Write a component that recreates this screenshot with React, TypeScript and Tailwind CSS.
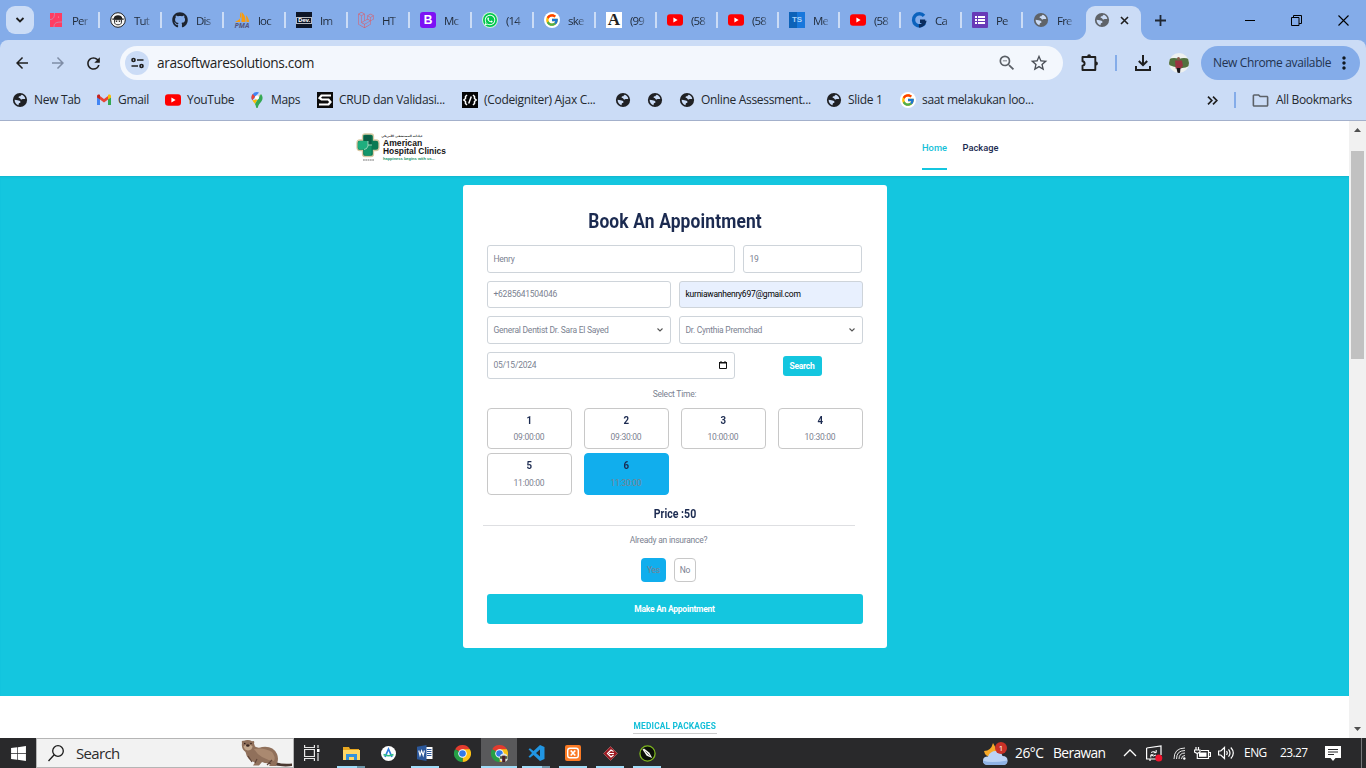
import type { ReactNode } from "react";
import { FaGithub, FaLaravel, FaWhatsapp, FaWindows } from "react-icons/fa";
import { FcGoogle } from "react-icons/fc";
import {
  MdArrowBack,
  MdArrowForward,
  MdMoreVert,
  MdOutlineFolder,
  MdRefresh,
  MdStarOutline,
  MdZoomOut,
} from "react-icons/md";

/* ---------- small brand icons ---------- */

const YouTube = () => (
  <svg width="16" height="16" viewBox="0 0 16 16">
    <rect y="2.3" width="16" height="11.4" rx="3" fill="#f00" />
    <path d="M6.4 5.6 10.6 8l-4.2 2.4z" fill="#fff" />
  </svg>
);

const Google = () => (
  <span className="flex size-4 items-center justify-center rounded-full bg-white">
    <FcGoogle size={14} />
  </span>
);

const Globe = ({ className }: { className: string }) => (
  <svg width="16" height="16" viewBox="0 0 16 16" className={className}>
    <circle cx="8" cy="8" r="7.100" fill="currentColor" />
    <path
      d="M9.700 2.700c1.800.6 3.200 2 3.600 3.900-.8.900-1.500.3-2.300.3-1 0-1 .9-2 .5-.9-.4-.6-1.500-1.500-1.500-.8 0-1.300-.5-.8-1.200.5-.6 1.600-.2 1.900-1zM2.600 7.800l2.900.4c1.300.2 3 .5 3 1.900 0 1.200-1.700.9-1.800 1.900l-.2 1.300C4.200 12.700 2.600 10.600 2.600 7.800z"
      fill="#cbdcf6"
    />
  </svg>
);

const Pink = () => (
  <svg width="16" height="16" viewBox="0 0 16 16">
    <path d="M2 1h12v14H2z" fill="#ff3d62" />
    <path d="M2 7.500c3.500 0 4.500-2.500 4.500-6.500M6 15c0-4 2-5 8-5" stroke="#c493b8" strokeWidth=".8" fill="none" />
    <circle cx="10.500" cy="5" r=".6" fill="#ff9ab0" />
  </svg>
);

const Face = () => (
  <svg width="16" height="16" viewBox="0 0 16 16">
    <circle cx="8" cy="8" r="7.3" fill="#f7f7f7" stroke="#222" strokeWidth="1" />
    <path d="M2.300 7.700h11.400V6.500h-1.400C12 4.300 10.500 3.200 8 3.200S4 4.300 3.700 6.500H2.300z" fill="#222" />
    <path d="M4.500 7.700h7v2.500c0 1.700-1.500 2.600-3.500 2.600s-3.500-.9-3.500-2.600z" fill="#f7f7f7" stroke="#222" strokeWidth=".9" />
    <circle cx="6.500" cy="9.300" r=".8" fill="#222" />
    <circle cx="9.500" cy="9.300" r=".8" fill="#222" />
  </svg>
);

const Pma = () => (
  <span className="flex h-4 w-4 flex-col items-center">
    <svg width="16" height="11" viewBox="0 0 16 11">
      <path d="M6 0c2 3 2 7-5 10h5zM7.500 0c4 3 4 7 4 10h-4zM12 3c2 2 3 5 3 7h-2.500z" fill="#f89c0e" />
    </svg>
    <span className="text-[7px] font-bold italic leading-[5px] text-[#54567e]">PMA</span>
  </span>
);

const Dev = () => (
  <span className="flex size-4 items-center justify-center bg-[#0d1628] text-[6px] font-bold tracking-tighter text-white">
    <span className="border border-white/70 px-px leading-[5px]">Dev.</span>
  </span>
);

const Bootstrap = () => (
  <span className="flex size-4 items-center justify-center rounded-[3px] bg-[#7c12f5] font-['Liberation_Sans'] text-[12px] font-bold text-white">
    B
  </span>
);

const WhatsApp = () => (
  <span className="flex size-4 items-center justify-center rounded-full border border-white/80 bg-[#00c84b]">
    <FaWhatsapp size={12} className="text-white" />
  </span>
);

const LetterA = () => (
  <span className="flex size-4 items-center justify-center bg-white font-['Liberation_Serif'] text-[17px] font-bold leading-4 text-[#222]">
    A
  </span>
);

const Ts = () => (
  <span className="flex size-4 items-center justify-center bg-gradient-to-r from-[#0d62b8] from-50% to-[#1877dc] to-50% font-['Liberation_Sans'] text-[8px] font-bold text-[#a9d2f8]">
    TS
  </span>
);

const BlueG = () => (
  <svg width="16" height="16" viewBox="0 0 16 16" fill="none" strokeWidth="3.4">
    <path d="M13 3.800A6 6 0 1 0 13.600 11" stroke="#0b62bd" />
    <path d="M14.200 9.200H9M13.900 8.500c-.3 3-2.500 5.500-6 5.500" stroke="#0a2c5e" />
  </svg>
);

const Forms = () => (
  <svg width="16" height="16" viewBox="0 0 16 16">
    <rect width="16" height="16" rx="1" fill="#673ab7" />
    <path d="M3 4h2v2H3zM6 4h7v2H6zM3 7h2v2H3zM6 7h7v2H6zM3 10h2v2H3zM6 10h7v2H6z" fill="#fff" />
  </svg>
);

const Gmail = () => (
  <svg width="16" height="16" viewBox="0 0 16 16">
    <path d="M1 5v8h3V7.300z" fill="#4285f4" />
    <path d="M15 5v8h-3V7.300z" fill="#34a853" />
    <path d="M4 4 8 7l4-3v3.600l-4 3-4-3z" fill="#ea4335" />
    <path d="M1 4.200C1 2.600 2.800 2 4 3v4.600L1 5.400z" fill="#c5221f" />
    <path d="M15 4.200C15 2.600 13.200 2 12 3v4.600l3-2.200z" fill="#fbbc04" />
  </svg>
);

const MapsPin = () => (
  <svg width="16" height="16" viewBox="0 0 16 16">
    <path d="M8 0a5.600 5.600 0 0 0-5.500 5.600c0 1 .3 1.900.8 2.700L10 .4A5.600 5.600 0 0 0 8 0z" fill="#4285f4" />
    <path d="M3.700 2.100A5.600 5.600 0 0 0 3.200 8.200L6.200 4.700z" fill="#ea4335" />
    <path d="M3.300 8.300c.8 1.400 2 2.400 2.700 3.700l5.600-10.100L6 8z" fill="#fbbc04" />
    <path
      d="M12 2c2 2.500 2 5 .5 7.300C11 11.500 9.500 12.500 8.800 15.400c-.2.800-1.400.8-1.600 0-.2-1.200-.6-2.300-1.200-3.400z"
      fill="#34a853"
    />
    <circle cx="8" cy="5.600" r="2.100" fill="#fff" />
  </svg>
);

const BlackS = () => (
  <svg width="16" height="16" viewBox="0 0 16 16">
    <path d="M0 0h16v16H0z" fill="#0b0b0b" />
    <path d="M14 3.500H4.500L2.500 6l2 1.500h7L13.500 10l-2 2.500H2" fill="none" stroke="#fff" strokeWidth="2.200" />
  </svg>
);

const CodeMark = () => (
  <svg width="16" height="16" viewBox="0 0 16 16">
    <path d="M0 0h16v16H0z" fill="#050505" />
    <path
      d="M5 3 3.500 4.500v2L1.800 8l1.700 1.500v2L5 13M11 3l1.500 1.500v2L14.200 8l-1.700 1.500v2L11 13M9.300 4.500 6.700 11.500"
      fill="none"
      stroke="#fff"
      strokeWidth="1.500"
    />
  </svg>
);

/* ---------- browser ---------- */

const tabs: { icon: ReactNode; text: string; wide?: boolean }[] = [
  { icon: <Pink />, text: "Per", wide: true },
  { icon: <Face />, text: "Tut", wide: true },
  { icon: <FaGithub size={16} className="text-[#1d2430]" />, text: "Dis", wide: true },
  { icon: <Pma />, text: "loc", wide: true },
  { icon: <Dev />, text: "Im", wide: true },
  { icon: <FaLaravel size={16} className="text-[#e2575f]" />, text: "HT", wide: true },
  { icon: <Bootstrap />, text: "Mc", wide: true },
  { icon: <WhatsApp />, text: "(14", wide: true },
  { icon: <Google />, text: "ske", wide: true },
  { icon: <LetterA />, text: "(99" },
  { icon: <YouTube />, text: "(58" },
  { icon: <YouTube />, text: "(58" },
  { icon: <Ts />, text: "Me" },
  { icon: <YouTube />, text: "(58" },
  { icon: <BlueG />, text: "Ca" },
  { icon: <Forms />, text: "Pe" },
  { icon: <Globe className="text-[#5f6368]" />, text: "Fre" },
];

function TabStrip() {
  return (
    <div className="flex h-10 shrink-0 items-center bg-[#84ace9]">
      <div className="ml-1.5 mr-1 flex size-7 items-center justify-center rounded-[9px] bg-[#cbdcf6]">
        <svg width="10" height="6" viewBox="0 0 10 6" fill="none" stroke="#1f1f1f" strokeWidth="1.8">
          <path d="m1.500 1 3.500 3.500L8.500 1" />
        </svg>
      </div>
      {tabs.map((tab, i) => (
        <div key={i} className="flex items-center pl-2.5">
          <span className="flex size-4 shrink-0 items-center justify-center">{tab.icon}</span>
          <span
            className={`${tab.wide ? "w-4" : "w-[15px]"} ml-2 whitespace-nowrap pt-px text-[11.500px] tracking-[-0.07em] text-[#1f2937] [mask-image:linear-gradient(to_right,black_60%,rgba(0,0,0,0.3))]`}
          >
            {tab.text}
          </span>
          {i < 16 && <span className="ml-2.5 h-4 w-0.5 bg-[#cbdcf6]" />}
        </div>
      ))}
      <div className="ml-[3px] flex h-10 items-end">
        <svg width="11" height="11" viewBox="0 0 11 11">
          <path d="M11 0v11H0C6 11 11 6 11 0z" fill="#cbdcf6" />
        </svg>
        <div className="flex h-[34px] w-[55px] items-center rounded-t-[9px] bg-[#cbdcf6] pb-1.5 pl-2">
          <Globe className="text-[#5f6368]" />
          <svg className="ml-2.5" width="9" height="9" viewBox="0 0 9 9" stroke="#1f1f1f" strokeWidth="1.600">
            <path d="m1 1 7 7M8 1 1 8" />
          </svg>
        </div>
        <svg width="11" height="11" viewBox="0 0 11 11">
          <path d="M0 0v11h11C5 11 0 6 0 0z" fill="#cbdcf6" />
        </svg>
      </div>
      <svg className="ml-[3px]" width="11" height="11" viewBox="0 0 11 11" stroke="#1f2733" strokeWidth="1.800">
        <path d="M5.500 0v11M0 5.500h11" />
      </svg>
      <div className="ml-auto flex items-center pr-[17px]">
        <svg width="10" height="11" viewBox="0 0 10 11" stroke="#000">
          <path d="M0 5.500h10" />
        </svg>
        <svg className="ml-9" width="11" height="11" viewBox="0 0 11 11" fill="none" stroke="#000">
          <path d="M.5 2.500h7.500v8H.5zM2.500 2.500v-2h8v8H8" />
        </svg>
        <svg className="ml-9" width="11" height="11" viewBox="0 0 11 11" stroke="#000" strokeWidth="1.100">
          <path d="m.5.5 10 10M10.500.5l-10 10" />
        </svg>
      </div>
    </div>
  );
}

function Toolbar() {
  return (
    <div className="bg-[#84ace9]">
      <div className="flex h-10 items-center rounded-t-lg bg-[#cbdcf6] pt-1.5 text-[#1f1f1f]">
        <MdArrowBack size={18} className="ml-[13px]" />
        <MdArrowForward size={18} className="ml-[18px] text-[#7f8da6]" />
        <MdRefresh size={19} className="ml-[17px]" />
        <div className="ml-[17px] flex h-[34px] w-[943px] items-center rounded-full bg-[#f3f7fd] pl-[5px]">
          <span className="flex size-6 items-center justify-center rounded-full bg-[#cbdcf6]">
            <svg width="13" height="12" viewBox="0 0 13 12" fill="none" stroke="#1f1f1f" strokeWidth="1.700">
              <circle cx="2.500" cy="3" r="1.500" />
              <path d="M6 3h6.500M.5 9H7" />
              <circle cx="10.500" cy="9" r="1.500" />
            </svg>
          </span>
          <span className="ml-2 pt-px text-[13.700px] tracking-[-0.026em]">arasoftwaresolutions.com</span>
          <MdZoomOut size={20} className="ml-auto text-[#5a5f66]" />
          <MdStarOutline size={20} className="ml-3 mr-[14px] text-[#4a4f57]" />
        </div>
        <svg
          className="ml-[17px]"
          width="19"
          height="18"
          viewBox="0 0 19 18"
          fill="none"
          stroke="#1f1f1f"
          strokeWidth="1.900"
          strokeLinejoin="round"
        >
          <path d="M2.500 3h12.800v13H2.500v-4.300c2.800-.3 2.800-4.100 0-4.400z" />
          <path d="M7.200 2.200a1.900 1.900 0 0 1 3.800 0zM16 7.600a1.900 1.900 0 0 1 0 3.800z" fill="#1f1f1f" stroke="none" />
        </svg>
        <span className="ml-4 h-4 w-0.5 bg-[#84ace9]" />
        <svg className="ml-[17px]" width="18" height="16" viewBox="0 0 18 16" fill="none" stroke="#1f1f1f" strokeWidth="2">
          <path d="M9 0v10M4.800 6 9 10.200 13.200 6M2 11v4h14v-4" />
        </svg>
        <svg className="ml-[17px]" width="20" height="20" viewBox="0 0 20 20">
          <clipPath id="avatar">
            <circle cx="10" cy="10" r="10" />
          </clipPath>
          <g clipPath="url(#avatar)">
            <path d="M0 0h20v20H0z" fill="#eef1f0" />
            <path d="M0 6q5-2 10 0 5-2 10 0v7q-5 3-10 1.500Q5 14 0 12z" fill="#53713f" />
            <circle cx="9.500" cy="5.500" r="1.500" fill="#8a5a4a" />
            <path d="M6 7.500h7l1 6h-1.500v2h-6v-3z" fill="#9b3041" />
            <path d="M7.500 15h4l-.5 5H8.500z" fill="#17171c" />
          </g>
        </svg>
        <div className="ml-3 flex h-[34px] w-[159px] items-center rounded-full bg-[#84ace9] pl-3 text-[12px] text-[#223350]">
          <span className="w-[119px] whitespace-nowrap tracking-[-0.03em]">New Chrome available</span>
          <MdMoreVert size={20} className="ml-0.5 text-[#101820]" />
        </div>
      </div>
    </div>
  );
}

function Bookmark({ icon, text, width }: { icon: ReactNode; text?: string; width: string }) {
  return (
    <div className={`flex shrink-0 items-center gap-1.5 ${width}`}>
      <span className="flex size-4 shrink-0 items-center justify-center">{icon}</span>
      <span className="whitespace-nowrap">{text}</span>
    </div>
  );
}

function Bookmarks() {
  const globe = <Globe className="text-[#202124]" />;
  return (
    <div className="flex h-[41px] shrink-0 items-center border-b border-[#a3b0cb] bg-[#cbdcf6] pl-3 text-[12px] tracking-[-0.026em] text-[#24292f]">
      <Bookmark icon={globe} text="New Tab" width="w-[84px]" />
      <Bookmark icon={<Gmail />} text="Gmail" width="w-[69px]" />
      <Bookmark icon={<YouTube />} text="YouTube" width="w-[84px]" />
      <Bookmark icon={<MapsPin />} text="Maps" width="w-[68px]" />
      <Bookmark icon={<BlackS />} text="CRUD dan Validasi..." width="w-[145px]" />
      <Bookmark icon={<CodeMark />} text="(Codeigniter) Ajax C..." width="w-[153px]" />
      <Bookmark icon={globe} width="w-[32px]" />
      <Bookmark icon={globe} width="w-[32px]" />
      <Bookmark icon={globe} text="Online Assessment..." width="w-[147px]" />
      <Bookmark icon={globe} text="Slide 1" width="w-[74px]" />
      <Bookmark icon={<Google />} text="saat melakukan loo..." width="w-[134px]" />
      <svg className="ml-auto" width="11" height="9" viewBox="0 0 11 9" fill="none" stroke="#1f1f1f" strokeWidth="1.700">
        <path d="m1 .7 3.800 3.800L1 8.300M6 .7l3.800 3.800L6 8.300" />
      </svg>
      <span className="ml-4 h-4 w-0.5 bg-[#84ace9]" />
      <MdOutlineFolder size={19} className="ml-[15px] text-[#5c6168]" />
      <span className="ml-1.5 w-[90px] whitespace-nowrap">All Bookmarks</span>
    </div>
  );
}

/* ---------- site ---------- */

function Logo() {
  return (
    <div className="flex h-[30px] items-center gap-[3px] font-['Liberation_Sans']">
      <svg width="24" height="29" viewBox="0 0 24 29" className="-mt-px">
        <path
          d="M9 1h6q2.500 0 2.500 2.500V7H20q3 0 3 3v4.500q0 3-3 3h-2.500V21q0 2.500-2.500 2.500H9q-2.500 0-2.500-2.500v-3.500H4q-3 0-3-3V10q0-3 3-3h2.500V3.500Q6.500 1 9 1z"
          fill="#0b7a53"
          stroke="#d8c9a4"
          strokeWidth="1.300"
        />
        <path d="M8 3q4-2 7.500 0v8H12V8H8z" fill="#0a5f46" />
        <path d="M2 10q0-2 2-2h8v4q0 4.500-4 4.500H4q-2 0-2-2z" fill="#1fae7e" />
        <path d="M8 16.500q4 0 4-4.500h3.500v8q0 2.500-2.500 2.500h-3Q8 22.500 8 20z" fill="#12966a" />
        <path d="M12 8v5q-1 3.500-4 3.500M12 12h4" stroke="#cfe8d4" strokeWidth=".7" fill="none" />
        <path d="M7 27h11" stroke="#777" strokeWidth="1.200" strokeDasharray="1.800 .5" />
      </svg>
      <div className="flex h-[30px] w-[64px] flex-col whitespace-nowrap">
        <span dir="rtl" className="flex h-[6px] w-[38px] items-center justify-center font-['DejaVu_Sans'] text-[3px] font-bold text-[#222]">
          عيادات المستشفى الأمريكي
        </span>
        <span className="text-[8.600px] font-bold leading-[8px] text-[#151515]">American</span>
        <span className="text-[8.400px] font-bold leading-[8px] text-[#151515]">Hospital Clinics</span>
        <span className="text-[4px] font-bold leading-[7px] text-[#15976b]">happiness begins with us...</span>
      </div>
    </div>
  );
}

function Field({ text, box, end, filled }: { text: string; box: string; end?: ReactNode; filled?: boolean }) {
  return (
    <div
      className={`flex items-center justify-between rounded-[3px] border border-[#ced4da] pl-1.5 pr-[7px] ${filled ? "bg-[#e8f0fe] text-black" : "bg-white text-[#7b8291]"} ${box}`}
    >
      <span>{text}</span>
      {end}
    </div>
  );
}

const Caret = () => (
  <svg width="6" height="4" viewBox="0 0 6 4" fill="none" stroke="#555" strokeWidth="1.100">
    <path d="m.5.5 2.500 2.500L5.500.5" />
  </svg>
);

const slots = ["09:00:00", "09:30:00", "10:00:00", "10:30:00", "11:00:00", "11:30:00"];

function BookingCard() {
  return (
    <div className="mx-auto h-[463px] w-[424px] rounded-[3px] bg-white px-6 pt-6 text-[8.500px] leading-[10px] tracking-[-0.029em] text-[#7b8291]">
      <h1 className="flex h-6 origin-center scale-x-[0.87] items-center justify-center whitespace-nowrap text-[20px] font-bold tracking-[0.008em] text-[#1b2a50]">
        Book An Appointment
      </h1>
      <div className="mt-3 flex gap-2">
        <Field text="Henry" box="h-7 w-[248px]" />
        <Field text="19" box="h-7 w-[119px]" />
      </div>
      <div className="mt-2 flex gap-2">
        <Field text="+6285641504046" box="h-[27px] flex-1 pb-px" />
        <Field text="kurniawanhenry697@gmail.com" box="h-[27px] flex-1 pb-px" filled />
      </div>
      <div className="mt-2 flex gap-2">
        <Field text="General Dentist Dr. Sara El Sayed" box="h-7 flex-1" end={<Caret />} />
        <Field text="Dr. Cynthia Premchad" box="h-7 flex-1" end={<Caret />} />
      </div>
      <div className="mt-2 flex items-center">
        <Field
          text="05/15/2024"
          box="h-[27px] w-[248px] pb-px"
          end={
            <svg width="8" height="8" viewBox="0 0 8 8">
              <path d="M.5 1.500h7v6h-7z" fill="none" stroke="#111" />
              <path d="M0 1h8v1.500H0zM1.500 0h1v1h-1zM5.500 0h1v1h-1z" fill="#111" />
            </svg>
          }
        />
        <button className="ml-12 h-5 w-[39px] rounded-[3px] bg-[#14c6df] font-bold text-white">Search</button>
      </div>
      <div className="mt-2.5 flex h-[10px] items-center justify-center">Select Time:</div>
      <div className="mt-[9px] grid grid-cols-[85px_85px_85px_85px] gap-x-3 gap-y-1">
        {slots.map((time, i) => (
          <div
            key={time}
            className={`flex flex-col items-center rounded-[4px] border pt-1.5 ${i > 3 ? "h-[42px]" : "h-[41px]"} ${i === 5 ? "border-[#11aeed] bg-[#11aeed]" : "border-[#c8c8c8]"}`}
          >
            <span className="scale-x-[0.88] text-[11px] font-bold leading-3 tracking-normal text-[#1b2a50]">{i + 1}</span>
            <span className={i > 3 ? "mt-1.5" : "mt-[5px]"}>{time}</span>
          </div>
        ))}
      </div>
      <div className="mt-3 flex h-[14px] scale-x-[0.88] items-center justify-center text-[12px] font-bold tracking-normal text-[#1b2a50]">
        Price :50
      </div>
      <div className="-ml-1 mt-1 w-[372px] border-t border-[#dedfe2]" />
      <div className="mr-3 mt-[9px] flex h-[10px] items-center justify-center">Already an insurance?</div>
      <div className="mr-3 mt-[13px] flex justify-center gap-2">
        <span className="flex h-6 w-[25px] items-center justify-center rounded-[4px] bg-[#11aeed]">Yes</span>
        <span className="flex h-6 w-[22px] items-center justify-center rounded-[4px] border border-[#c8c8c8]">No</span>
      </div>
      <button className="mt-3 h-[30px] w-full rounded-[3px] bg-[#14c6df] font-bold text-white">Make An Appointment</button>
    </div>
  );
}

function Site() {
  return (
    <div className="flex h-[617px] shrink-0 bg-white">
      <div className="flex w-[1349px] flex-col font-['Roboto',sans-serif]">
        <header className="flex h-[55px] shrink-0 pl-[356px] pt-3">
          <Logo />
          <nav className="ml-[475px] flex gap-[15px] text-[9.300px] font-medium">
            <a className="flex h-[37px] w-[25px] items-center justify-center whitespace-nowrap border-b-2 border-[#14c6df] pb-2 pt-0.5 text-[#14bfd8]">
              Home
            </a>
            <a className="flex h-[37px] w-[37px] items-center justify-center pb-2.5 pt-0.5 text-[#1b2a50]">
              Package
            </a>
          </nav>
        </header>
        <main className="h-[520px] shrink-0 bg-[#14c6df] pt-[9px] shadow-[inset_0_2px_2px_-1px_#12b5cd]">
          <BookingCard />
        </main>
        <section className="flex justify-center pt-[23px]">
          <span className="flex h-[15px] w-[84px] justify-center border-b border-[#cccccc] text-[9.500px] font-bold leading-[14px] tracking-[0.02em] text-[#14bfd8]">
            <span className="scale-x-[0.88] whitespace-nowrap">MEDICAL PACKAGES</span>
          </span>
        </section>
      </div>
      <div className="flex w-[17px] flex-col items-center bg-[#f1f1f1]">
        <svg className="mt-[7px]" width="7" height="4" viewBox="0 0 7 4">
          <path d="M0 4h7L3.500 0z" fill="#505050" />
        </svg>
        <span className="mt-[19px] h-[208px] w-[13px] bg-[#c1c1c1]" />
        <svg className="mb-[7px] mt-auto" width="7" height="4" viewBox="0 0 7 4">
          <path d="M0 0h7L3.500 4z" fill="#505050" />
        </svg>
      </div>
    </div>
  );
}

/* ---------- taskbar ---------- */

const Chrome = ({ badge }: { badge?: boolean }) => (
  <svg width="17" height="17" viewBox="0 0 16 16">
    <path d="M8 8 1.070 4A8 8 0 0 1 14.930 4z" fill="#e33b2e" />
    <path d="M8 8 14.930 4A8 8 0 0 1 8 16z" fill="#fbc116" />
    <path d="M8 8v8A8 8 0 0 1 1.070 4z" fill="#269f46" />
    <path d="M8 4h7L11.500 10 8 16l3-6z" fill="#fbc116" />
    <circle cx="8" cy="8" r="4" fill="#fff" />
    <circle cx="8" cy="8" r="3.100" fill="#3279e8" />
    {badge && (
      <>
        <circle cx="12" cy="12" r="4" fill="#dfe5e0" />
        <path d="M8.500 10.500h7V13h-7z" fill="#50603f" />
        <path d="M10.500 10h3v6h-3z" fill="#4c1f2b" />
      </>
    )}
  </svg>
);

const Explorer = () => (
  <svg width="17" height="15" viewBox="0 0 17 15">
    <path d="M0 1h6l1 2h9v11H0z" fill="#e9a820" />
    <path d="M0 4h17v10H0z" fill="#ffd766" />
    <path d="M3 8h11v6h-3v-3H6v3H3z" fill="#3492dc" />
  </svg>
);

const AppA = () => (
  <svg width="15" height="15" viewBox="0 0 15 15" fill="none">
    <circle cx="7.500" cy="7.500" r="7.500" fill="#fff" />
    <path d="m4 11 3.500-8L11 11" stroke="#2f7de0" strokeWidth="1.700" />
    <path d="M2.500 8.500q5 2.500 10 0" stroke="#31bd85" strokeWidth="1.500" />
  </svg>
);

const Word = () => (
  <svg width="16" height="16" viewBox="0 0 16 16">
    <path d="M8 2h7.500v12H8z" fill="#fff" />
    <path d="M10 4.500h4.500M10 6.500h4.500M10 8.500h4.500M10 10.500h4.500" stroke="#2b579a" />
    <path d="M0 1.700 9.500 0v16L0 14.300z" fill="#2b579a" />
    <path d="m1.800 5.500 1.200 5 1.600-4.700 1.600 4.700 1.200-5" fill="none" stroke="#fff" strokeWidth="1.100" />
  </svg>
);

const VsCode = () => (
  <svg width="17" height="16" viewBox="0 0 17 16">
    <path
      d="m12 0 4.500 2v12L12 16 5.500 10 2 12.700.5 11.800 4 8 .5 4.200 2 3.300 5.500 6zm0 4.500L8 8l4 3.500z"
      fill="#2196e3"
    />
  </svg>
);

const Xampp = () => (
  <svg width="16" height="16" viewBox="0 0 16 16" fill="none" stroke="#fff">
    <rect width="16" height="16" rx="2" fill="#fb7a24" stroke="none" />
    <rect x="2.700" y="3.200" width="10.600" height="9.600" rx="2.200" strokeWidth="1.400" />
    <path d="m5.700 5.500 4.600 5M10.300 5.500l-4.600 5" strokeWidth="1.600" />
  </svg>
);

const RedDiamond = () => (
  <svg width="15" height="15" viewBox="0 0 15 15" fill="none">
    <path d="M7.500.5 14.500 7.500 7.500 14.500.5 7.500z" fill="#9c1a22" stroke="#c98a8a" strokeWidth=".5" />
    <path d="M10.500 5.500 8 4 4.500 7.500 8 11l2.500-2M6 7.500h5" stroke="#fff" strokeWidth="1.200" />
  </svg>
);

const Corel = () => (
  <svg width="17" height="17" viewBox="0 0 17 17">
    <circle cx="8.500" cy="8.500" r="7.600" fill="#0b0f08" stroke="#7db51f" strokeWidth="1.300" />
    <path d="M3.500 4.500 5 3.500l5.500 4.300L13.200 13l-5.500-2.200z" fill="#f2f2ee" />
    <path d="m6.500 6.500 4 4" stroke="#3b3f35" strokeWidth=".7" />
  </svg>
);

const apps: { icon: ReactNode; bar?: string; active?: boolean }[] = [
  { icon: <Explorer />, bar: "w-7 bg-gradient-to-r from-[#a0dcf8] from-70% to-[#6d96a9] to-70%" },
  { icon: <AppA /> },
  { icon: <Word />, bar: "w-7 bg-[#a0dcf8]" },
  { icon: <Chrome /> },
  { icon: <Chrome badge />, bar: "w-9 bg-[#a0dcf8]", active: true },
  { icon: <VsCode />, bar: "w-7 bg-gradient-to-r from-[#a0dcf8] from-70% to-[#6d96a9] to-70%" },
  { icon: <Xampp />, bar: "w-7 bg-[#a0dcf8]" },
  { icon: <RedDiamond />, bar: "w-7 bg-[#a0dcf8]" },
  { icon: <Corel />, bar: "w-7 bg-[#a0dcf8]" },
];

const Otter = () => (
  <svg width="53" height="27" viewBox="0 0 53 27">
    <path d="M32 20q8 5 20 3.500V26q-10 1.500-24-2z" fill="#4a3830" />
    <path
      d="M2 3Q1 0 4 .8 8-1 12 1.200 15 0 14 3.500l1 3q3 2 7 .5 11-1.500 15 7 2 5 0 9l-1 3h-7l2-3q-5 1-9-1l-3 3.500h-6l2-3Q7 20 5.500 12 1 9 2 3z"
      fill="#90705b"
    />
    <path d="M14 9q10-2 18 3 4 5 2 9Q20 19 14 9z" fill="#aa8970" />
    <path d="M3.500 6q4.500-3 9 0 0 4-4.500 4.500Q4 10 3.500 6z" fill="#c4a88e" />
    <ellipse cx="7.800" cy="5.500" rx="1.800" ry="1.200" fill="#3a251f" />
    <circle cx="4.800" cy="3.500" r=".7" fill="#211" />
    <circle cx="11" cy="3.500" r=".7" fill="#211" />
    <path d="m8 16 4 6M15 23l2-4M27 25l5-5" stroke="#604438" strokeWidth="1.200" />
  </svg>
);

function Taskbar() {
  return (
    <div className="flex h-[30px] shrink-0 items-center bg-[#29292b] text-white">
      <div className="flex w-9 justify-center">
        <FaWindows size={17} />
      </div>
      <div className="flex h-[30px] w-[258px] items-center border border-[#b5b5b5] bg-[#f2f2f2] pl-[11px] text-[#2b2b2b]">
        <svg width="16" height="17" viewBox="0 0 16 17" fill="none" stroke="#1c1c1c" strokeWidth="1.300">
          <circle cx="10" cy="6" r="5.300" />
          <path d="M6.200 9.800.5 16" />
        </svg>
        <span className="ml-3 pt-px text-[15px] tracking-[-0.045em]">Search</span>
        <span className="ml-auto self-end">
          <Otter />
        </span>
      </div>
      <svg className="ml-2.5 mr-[13px]" width="16" height="16" viewBox="0 0 16 16" fill="none" stroke="#e8e8e8" strokeWidth="1.200">
        <path d="M.6 0v2.500h9.800V0M.6 16v-2.500h9.800V16M.6 4.500h9.800v7H.6zM14 0v3M14 8v8" />
        <path d="M13 4h2.500v3H13z" fill="#fff" stroke="none" />
      </svg>
      {apps.map((app, i) => (
        <div key={i} className={`mr-px flex h-[30px] w-9 flex-col items-center ${app.active ? "bg-[#59595b]" : ""}`}>
          <span className="flex flex-1 items-center pt-0.5">{app.icon}</span>
          <span className={`h-0.5 ${app.bar ?? ""}`} />
        </div>
      ))}
      <div className="ml-auto flex w-[384px] items-center whitespace-nowrap">
        <svg width="26" height="25" viewBox="0 0 26 25">
          <path d="M11 2q-2 8-9 8 1 6 8 6l6-5z" fill="#f7a928" />
          <path d="M6 24q-5 0-5-4.500 0-4 5-4Q8 10 14 10q5 0 6.500 5 5 0 5 4.500T21 24z" fill="#bcd3f5" />
          <path d="M6 24q-5 0-5-4.500 7 3 24.500 0Q25 24 21 24z" fill="#8fb3e6" />
          <circle cx="19" cy="7" r="6" fill="#c93127" />
          <text x="19" y="10" textAnchor="middle" fontSize="8" fill="#fff">
            1
          </text>
        </svg>
        <span className="ml-[7px] w-[38px] pt-px text-[13.800px] tracking-[-0.035em]">26°C</span>
        <span className="w-[70px] pt-px text-[13.800px] tracking-[-0.045em]">Berawan</span>
        <svg width="14" height="8" viewBox="0 0 14 8" fill="none" stroke="#fff" strokeWidth="1.300">
          <path d="m1 7 6-6 6 6" />
        </svg>
        <svg className="ml-[9px]" width="17" height="17" viewBox="0 0 17 17" fill="none" stroke="#fff" strokeWidth="1.200">
          <path d="M.6 3 15 1v9M.6 3v11H10M4 14v2" />
          <path d="M5 7.500q2.500-2 5 0M10.200 5v2.700H7.500M10 10q-2.500 2-5 0M4.800 12.500V9.800h2.700" strokeWidth="1" />
          <circle cx="12.800" cy="13" r="3.500" fill="#f0142d" stroke="none" />
        </svg>
        <svg className="ml-2.5" width="13" height="13" viewBox="0 0 13 13" fill="none" stroke="#e8e8e8" strokeWidth="1">
          <path d="M1 12Q1 1 12 1M3.500 12q0-8.500 8.500-8.500M6 12q0-6 6-6M8.500 12q0-3.500 3.500-3.500" />
          <circle cx="11.300" cy="11.500" r="1.200" fill="#fff" stroke="none" />
        </svg>
        <svg className="ml-2" width="17" height="13" viewBox="0 0 17 13" fill="none" stroke="#fff" strokeWidth="1.200">
          <path d="M2 0v3M4.500 0v3M.5 3h5.500v2L3.300 6.500.5 5zM3.300 6v5.500H14.500v-8H7M15 5.500h1.500v4H15" />
          <path d="M5 5.500h7.500v4.300H5z" fill="#fff" stroke="none" />
        </svg>
        <svg className="ml-[7px]" width="17" height="14" viewBox="0 0 17 14" fill="none" stroke="#fff" strokeWidth="1.200">
          <path d="M.6 5h2.200L6.500 1.500v11L2.800 9H.6zM8.500 5q1.500 2 0 4M10.500 3.300q3 3.700 0 7.400M12.800 1.500q5 5.500 0 11" />
        </svg>
        <span className="ml-[9px] w-9 text-[11.900px] tracking-[-0.04em]">ENG</span>
        <span className="w-11 text-[11.900px] tracking-[-0.05em]">23.27</span>
        <svg width="18" height="17" viewBox="0 0 18 17">
          <path d="M1 1h16v12h-5.500L9 16l-2.500-3H1z" fill="#fff" />
          <path d="M4 4.500h10M4 7h10M4 9.500h6" stroke="#29292b" />
        </svg>
        <span className="ml-auto mr-1 h-[30px] w-px bg-[#77777a]" />
      </div>
    </div>
  );
}

export default function App() {
  return (
    <div className="flex h-[768px] w-[1366px] flex-col overflow-hidden font-['Open_Sans','Noto_Sans',sans-serif]">
      <TabStrip />
      <Toolbar />
      <Bookmarks />
      <Site />
      <Taskbar />
    </div>
  );
}
